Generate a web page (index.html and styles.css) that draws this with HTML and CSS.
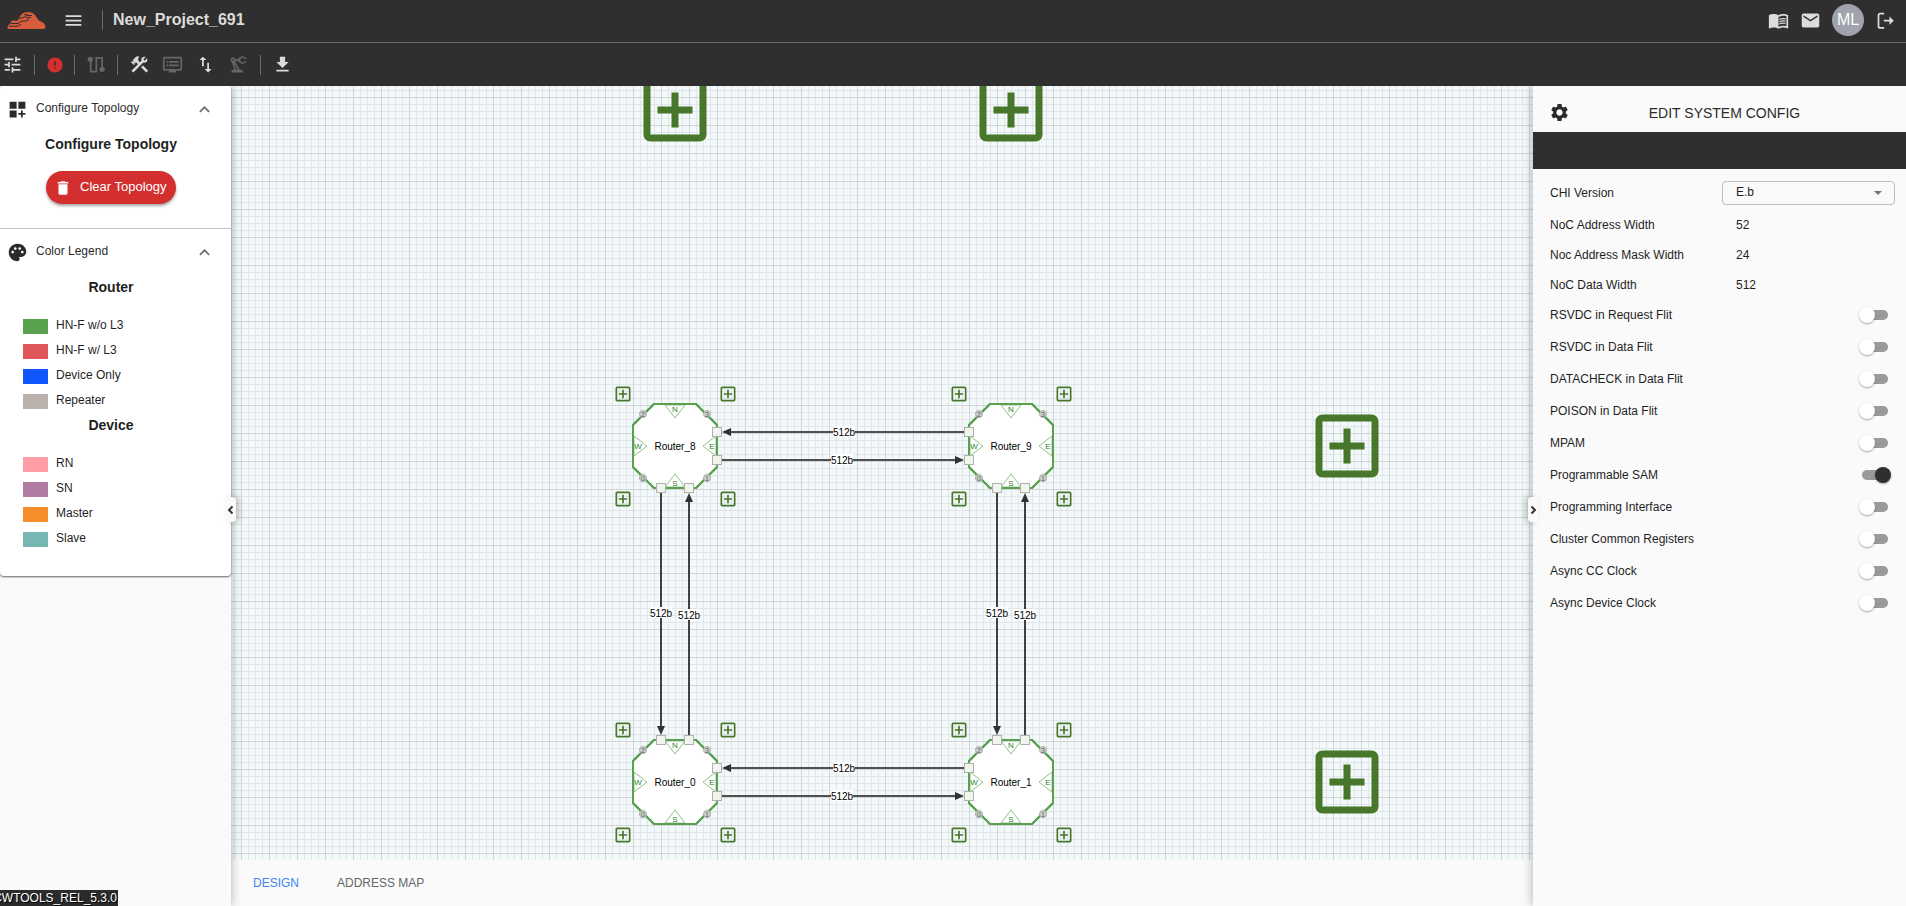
FILE: index.html
```html
<!DOCTYPE html>
<html lang="en">
<head>
<meta charset="utf-8">
<title>New_Project_691</title>
<link rel="stylesheet" href="styles.css">
</head>
<body>
<header class="header">
  <div class="bar">
    <svg class="logo" viewBox="0 0 39 17" aria-label="Logo"><path fill="#d75c3c" d="M2 17Q0 17 .4 15Q1 12.500 3.500 11.500L4.500 8.800L11 8.500L12 6Q14.500 0 20.500 0Q27 0 29.500 5.300Q31 8 33 9.200Q38 10.500 38.500 15Q38.500 17 36 17Z"/><path fill="none" stroke="#2f2f2f" stroke-width="1" d="M4 11.500H11L14 9.300L20 8.700L22 7M2 14.200H11L14 12.200M12 6.200L17 5.500L20 3.500H25M19 6L24 5.300M17 3L21 2"/></svg>
    <button class="icon-btn menu" aria-label="Menu"><svg class="icon" viewBox="0 0 24 24"><path d="M3 18h18v-2H3v2zm0-5h18v-2H3v2zm0-7v2h18V6H3z"/></svg></button>
    <span class="sep"></span>
    <h1 class="project">New_Project_691</h1>
    <div class="actions">
      <button class="icon-btn" aria-label="Documentation"><svg class="icon" viewBox="0 0 24 24"><path d="M21 5c-1.110-.35-2.330-.5-3.500-.5-1.950 0-4.050.4-5.500 1.500-1.450-1.100-3.550-1.500-5.500-1.500S2.450 4.900 1 6v14.650c0 .25.25.5.5.5.1 0 .15-.05.25-.05C3.100 20.450 5.050 20 6.500 20c1.950 0 4.050.4 5.500 1.500 1.350-.85 3.800-1.500 5.500-1.500 1.650 0 3.350.3 4.750 1.050.1.050.15.050.25.050.25 0 .5-.25.5-.5V6c-.6-.45-1.250-.75-2-1zm0 13.500c-1.100-.35-2.300-.5-3.500-.5-1.700 0-4.150.65-5.500 1.500V8c1.350-.85 3.800-1.500 5.500-1.500 1.200 0 2.400.15 3.500.5v11.500z"/><path d="M17.500 10.500c.88 0 1.730.09 2.500.26V9.240c-.79-.15-1.640-.24-2.500-.24-1.700 0-3.240.29-4.500.83v1.660c1.130-.64 2.700-.99 4.500-.99zM13 12.490v1.660c1.130-.64 2.700-.99 4.500-.99.88 0 1.730.09 2.500.26V11.900c-.79-.15-1.640-.24-2.500-.24-1.700 0-3.240.3-4.500.83zm4.500 1.840c-1.700 0-3.240.29-4.500.83v1.660c1.130-.64 2.700-.99 4.500-.99.88 0 1.730.09 2.500.26v-1.520c-.79-.16-1.640-.24-2.500-.24z"/></svg></button>
      <button class="icon-btn" aria-label="Mail"><svg class="icon" viewBox="0 0 24 24"><path d="M20 4H4c-1.100 0-1.990.9-1.990 2L2 18c0 1.100.9 2 2 2h16c1.100 0 2-.9 2-2V6c0-1.100-.9-2-2-2zm0 4l-8 5-8-5V6l8 5 8-5v2z"/></svg></button>
      <button class="avatar">ML</button>
      <button class="icon-btn" aria-label="Log out"><svg class="icon" viewBox="0 0 24 24"><path class="line" d="M10.500 4H6Q4 4 4 6v12.500q0 2 2 2h4.500M10 12.200h9"/><path d="M16.500 7.500l5 4.700-5 4.700z"/></svg></button>
    </div>
  </div>
  <div class="tools">
    <button class="icon-btn" aria-label="Settings"><svg class="icon" viewBox="0 0 24 24"><path d="M3 17v2h6v-2H3zM3 5v2h10V5H3zm10 16v-2h8v-2h-8v-2h-2v6h2zM7 9v2H3v2h4v2h2V9H7zm14 4v-2H11v2h10zm-6-4h2V7h4V5h-4V3h-2v6z"/></svg></button>
    <span class="sep"></span>
    <button class="icon-btn error" aria-label="Errors"><svg class="icon small" viewBox="0 0 24 24"><path d="M12 2C6.480 2 2 6.480 2 12s4.480 10 10 10 10-4.480 10-10S17.520 2 12 2zm1 15h-2v-2h2v2zm0-4h-2V7h2v6z"/></svg></button>
    <span class="sep"></span>
    <button class="icon-btn" aria-label="Route" disabled><svg class="icon" viewBox="0 0 24 24"><path class="line" d="M6.500 6v14h6.500V4.500h6.500V17"/><circle cx="6" cy="6" r="3"/><circle cx="19.500" cy="17.500" r="3"/></svg></button>
    <span class="sep"></span>
    <div class="group">
      <button class="icon-btn" aria-label="Build"><svg class="icon" viewBox="0 0 24 24"><path d="M13.783 15.172l2.121-2.121 5.996 5.996-2.121 2.121z"/><path d="M17.500 10c1.930 0 3.500-1.570 3.500-3.500 0-.58-.16-1.120-.41-1.600l-2.700 2.700-1.490-1.490 2.700-2.700c-.48-.25-1.020-.41-1.600-.41C15.570 3 14 4.570 14 6.500c0 .41.08.8.21 1.160l-1.850 1.850-1.780-1.780.71-.71-1.410-1.410L12 3.490c-1.170-1.170-3.070-1.170-4.240 0L4.220 7.030l1.410 1.410H2.810l-.71.71 3.540 3.540.71-.71V9.150l1.410 1.410.71-.71 1.780 1.780-7.410 7.410 2.120 2.120L16.340 9.790c.36.13.75.21 1.160.21z"/></svg></button>
      <button class="icon-btn" aria-label="Console" disabled><svg class="icon" viewBox="0 0 24 24"><path d="M21 3H3c-1.100 0-2 .9-2 2v12c0 1.100.9 2 2 2h5v2h8v-2h5c1.100 0 1.990-.9 1.990-2L23 5c0-1.100-.9-2-2-2zm0 14H3V5h18v12zm-2-9H8v2h11V8zm0 4H8v2h11v-2zM7 8H5v2h2V8zm0 4H5v2h2v-2z"/></svg></button>
      <button class="icon-btn" aria-label="Import and export"><svg class="icon" viewBox="0 0 24 24"><path d="M9 3L5 6.990h3V14h2V6.990h3L9 3zm7 14.010V10h-2v7.010h-3L15 21l4-3.990h-3z"/></svg></button>
      <button class="icon-btn" aria-label="Generate" disabled><svg class="icon" viewBox="0 0 24 24"><path d="m19.930 8.350-3.600 1.680L14 7.700V6.300l2.330-2.330 3.600 1.680c.38.18.82.01 1-.36.18-.38.01-.82-.36-1l-3.920-1.830c-.38-.18-.83-.1-1.130.2L13.780 4.400c-.18-.24-.46-.4-.78-.4-.55 0-1 .45-1 1v1H8.820C8.400 4.840 7.300 4 6 4 4.340 4 3 5.340 3 7c0 1.100.6 2.050 1.480 2.580L7.080 18H6c-1.100 0-2 .9-2 2v1h13v-1c0-1.100-.9-2-2-2h-1.620L8.410 8.770c.17-.24.31-.49.41-.77H12v1c0 .55.45 1 1 1 .32 0 .6-.16.78-.4l1.740 1.740c.3.3.75.38 1.130.2l3.920-1.830c.38-.18.54-.62.36-1-.18-.37-.62-.54-1-.36zM6 8c-.55 0-1-.45-1-1s.45-1 1-1 1 .45 1 1-.45 1-1 1zm5.110 10H9.170l-2.460-8h.1l4.300 8z"/></svg></button>
    </div>
    <span class="sep"></span>
    <button class="icon-btn" aria-label="Download"><svg class="icon" viewBox="0 0 24 24"><path d="M19 9h-4V3H9v6H5l7 7 7-7zM5 18v2h14v-2H5z"/></svg></button>
  </div>
</header>

<div class="workspace">
  <aside class="sidebar">
    <div class="cards">
      <section class="card">
        <button class="card-head">
          <svg class="icon" viewBox="0 0 24 24"><path d="M3 3h8v8H3zm10 0h8v8h-8zM3 13h8v8H3zm15 0h-2v3h-3v2h3v3h2v-3h3v-2h-3z"/></svg>
          <span class="card-title">Configure Topology</span>
          <svg class="icon chevron" viewBox="0 0 24 24"><path d="M12 8l-6 6 1.410 1.410L12 10.830l4.590 4.580L18 14z"/></svg>
        </button>
        <h2 class="subhead">Configure Topology</h2>
        <button class="clear"><svg class="icon small" viewBox="0 0 24 24"><path d="M6 19c0 1.100.9 2 2 2h8c1.100 0 2-.9 2-2V7H6v12zM19 4h-3.500l-1-1h-5l-1 1H5v2h14V4z"/></svg><span>Clear Topology</span></button>
      </section>
      <section class="card">
        <button class="card-head">
          <svg class="icon" viewBox="0 0 24 24"><path d="M12 2C6.490 2 2 6.490 2 12s4.490 10 10 10c1.380 0 2.500-1.120 2.500-2.500 0-.61-.23-1.200-.64-1.670-.08-.1-.13-.21-.13-.33 0-.28.22-.5.5-.5H16c3.310 0 6-2.690 6-6 0-4.960-4.490-9-10-9zm5.500 11c-.83 0-1.500-.67-1.500-1.500s.67-1.500 1.500-1.500 1.500.67 1.500 1.500-.67 1.500-1.500 1.500zm-3-4c-.83 0-1.500-.67-1.500-1.500S13.670 6 14.500 6s1.500.67 1.500 1.500S15.330 9 14.500 9zM5 11.500c0-.83.67-1.500 1.500-1.500s1.500.67 1.500 1.500S7.330 13 6.500 13 5 12.330 5 11.500zm6-4c0 .83-.67 1.500-1.500 1.500S8 8.330 8 7.500 8.670 6 9.500 6s1.500.67 1.500 1.500z"/></svg>
          <span class="card-title">Color Legend</span>
          <svg class="icon chevron" viewBox="0 0 24 24"><path d="M12 8l-6 6 1.410 1.410L12 10.830l4.590 4.580L18 14z"/></svg>
        </button>
        <h2 class="subhead">Router</h2>
        <ul class="legend">
          <li><span class="swatch green"></span>HN-F w/o L3</li>
          <li><span class="swatch red"></span>HN-F w/ L3</li>
          <li><span class="swatch blue"></span>Device Only</li>
          <li><span class="swatch grey"></span>Repeater</li>
        </ul>
        <h2 class="subhead">Device</h2>
        <ul class="legend">
          <li><span class="swatch pink"></span>RN</li>
          <li><span class="swatch purple"></span>SN</li>
          <li><span class="swatch orange"></span>Master</li>
          <li><span class="swatch teal"></span>Slave</li>
        </ul>
      </section>
    </div>
    <button class="handle handle-left" aria-label="Collapse left panel"><svg viewBox="0 0 8 10"><path d="M5.500 1.500L2 5l3.500 3.500"/></svg></button>
    <div class="version"><span>CWTOOLS_REL_5.3.0</span></div>
  </aside>

  <main class="main">
    <svg class="canvas" id="canvas"></svg>
    <nav class="tabs">
      <a class="tab active" href="#design">DESIGN</a>
      <a class="tab" href="#address-map">ADDRESS MAP</a>
    </nav>
  </main>

  <aside class="config">
    <div class="config-head">
      <svg class="icon" viewBox="0 0 24 24"><path d="M19.140 12.940c.04-.3.06-.61.06-.94 0-.32-.02-.64-.07-.94l2.030-1.580c.18-.14.23-.41.12-.61l-1.920-3.320c-.12-.22-.37-.29-.59-.22l-2.390.96c-.5-.38-1.030-.7-1.620-.94l-.36-2.540c-.04-.24-.24-.41-.48-.41h-3.840c-.24 0-.43.17-.47.41l-.36 2.540c-.59.24-1.130.57-1.620.94l-2.390-.96c-.22-.08-.47 0-.59.22L2.740 8.870c-.12.21-.08.47.12.61l2.030 1.580c-.05.3-.09.63-.09.94s.02.64.07.94l-2.030 1.580c-.18.14-.23.41-.12.61l1.920 3.320c.12.22.37.29.59.22l2.390-.96c.5.38 1.030.7 1.620.94l.36 2.540c.05.24.24.41.48.41h3.840c.24 0 .44-.17.47-.41l.36-2.540c.59-.24 1.130-.56 1.620-.94l2.390.96c.22.08.47 0 .59-.22l1.920-3.320c.12-.22.07-.47-.12-.61l-2.010-1.580zM12 15.600c-1.980 0-3.600-1.620-3.600-3.600s1.620-3.600 3.600-3.600 3.600 1.620 3.600 3.600-1.620 3.600-3.600 3.600z"/></svg>
      <h2>EDIT SYSTEM CONFIG</h2>
    </div>
    <div class="config-band"></div>
    <form class="fields">
      <div class="field"><label for="chi">CHI Version</label>
        <span class="select"><select id="chi"><option>E.b</option></select></span></div>
      <div class="field"><label for="aw">NoC Address Width</label><output id="aw">52</output></div>
      <div class="field"><label for="amw">Noc Address Mask Width</label><output id="amw">24</output></div>
      <div class="field"><label for="dw">NoC Data Width</label><output id="dw">512</output></div>
      <label class="toggle">RSVDC in Request Flit<input type="checkbox"></label>
      <label class="toggle">RSVDC in Data Flit<input type="checkbox"></label>
      <label class="toggle">DATACHECK in Data Flit<input type="checkbox"></label>
      <label class="toggle">POISON in Data Flit<input type="checkbox"></label>
      <label class="toggle">MPAM<input type="checkbox"></label>
      <label class="toggle">Programmable SAM<input type="checkbox" checked></label>
      <label class="toggle">Programming Interface<input type="checkbox"></label>
      <label class="toggle">Cluster Common Registers<input type="checkbox"></label>
      <label class="toggle">Async CC Clock<input type="checkbox"></label>
      <label class="toggle">Async Device Clock<input type="checkbox"></label>
    </form>
    <button class="handle handle-right" aria-label="Collapse right panel"><svg viewBox="0 0 8 10"><path d="M2.500 1.500L6 5 2.500 8.500"/></svg></button>
  </aside>
</div>
<script src="script.js"></script>
</body>
</html>
```
FILE: styles.css
```css
* { box-sizing: border-box; }

body {
  margin: 0;
  height: 100vh;
  display: flex;
  flex-direction: column;
  overflow: hidden;
  font: 12px/16px "Liberation Sans", Arial, sans-serif;
  color: #1f1f1f;
  background: #fafafa;
}

button {
  border: 0;
  padding: 0;
  background: none;
  color: inherit;
  font: inherit;
  cursor: pointer;
}

h1, h2, ul { margin: 0; padding: 0; }
ul { list-style: none; }

.icon {
  display: block;
  flex: none;
  width: 21px;
  height: 21px;
  fill: currentColor;
}
.icon.small { width: 18px; height: 18px; }
.line { fill: none; stroke: currentColor; stroke-width: 2; }

/* Header */
.header {
  flex: none;
  background: #2f2f2f;
  color: #dcdcdc;
  position: relative;
  z-index: 3;
}
.bar, .tools {
  display: flex;
  align-items: center;
  height: 43px;
}
.bar { border-bottom: 1px solid #6b6b6b; padding: 0 10px 2px 7px; }
.tools { padding-left: 2px; }
.logo { width: 39px; height: 17px; }
.menu { margin: 0 18px 0 17px; }
.sep { width: 1px; height: 20px; background: #6b6b6b; }
.bar .sep { margin-right: 10px; }
.project { font-size: 16px; line-height: 20px; }
.actions {
  margin-left: auto;
  display: flex;
  align-items: center;
  gap: 11px;
}
.avatar {
  width: 32px;
  height: 32px;
  border-radius: 50%;
  background: #a0a3ad;
  color: #fff;
  font-size: 16px;
}
.tools .sep { margin: 0 11px; }
.tools .error + .sep { margin: 0 10px; }
.icon-btn:disabled { color: #666; }
.error { color: #d32f2f; }
.group { display: flex; gap: 12px; }

/* Panels */
.workspace { flex: 1; display: flex; min-height: 0; }
.sidebar, .config {
  flex: none;
  position: relative;
  z-index: 2;
  background: #fafafa;
  box-shadow: 0 0 10px rgba(0, 0, 0, .3);
}
.sidebar { width: 231px; }
.config { width: 373px; }

.cards {
  background: #fff;
  border-radius: 4px;
  box-shadow: 0 1px 2px rgba(0, 0, 0, .6);
}
.card + .card { border-top: 1px solid #c4c4c4; }
.card { padding-bottom: 24px; }
.card-head {
  display: flex;
  align-items: center;
  width: 100%;
  height: 46px;
  padding: 0 16px 0 7px;
  color: #2b2b2b;
  text-align: left;
}
.card-title { flex: 1; margin-left: 8px; padding-bottom: 2px; }
.chevron { color: #6b6b6b; }
.subhead {
  margin-right: 9px;
  font-size: 14px;
  line-height: 24px;
  text-align: center;
}
.legend + .subhead { margin-top: -1px; }
.clear {
  display: flex;
  align-items: center;
  gap: 8px;
  width: 130px;
  height: 33px;
  margin: 15px 0 0 46px;
  padding-left: 8px;
  border-radius: 17px;
  background: #d32f2f;
  color: #fff;
  font-size: 13px;
  white-space: nowrap;
  box-shadow: 0 2px 3px rgba(0, 0, 0, .35);
}
.clear span { padding-bottom: 2px; }
.legend { padding: 15px 0 0 23px; }
.legend li {
  display: flex;
  align-items: flex-start;
  gap: 8px;
  height: 25px;
  line-height: 23px;
}
.swatch { width: 25px; height: 15px; margin-top: 5px; }
.green { background: #59a14f; }
.red { background: #e15759; }
.blue { background: #1157ff; }
.grey { background: #bab0ac; }
.pink { background: #ff9da7; }
.purple { background: #b07aa1; }
.orange { background: #f58e2b; }
.teal { background: #76b7b2; }

.handle {
  position: absolute;
  top: 411px;
  width: 10px;
  height: 25px;
  background: #fafafa;
}
.handle svg {
  display: block;
  width: 8px;
  height: 10px;
  margin-left: 1px;
  fill: none;
  stroke: #333;
  stroke-width: 2;
}
.handle-left { right: -5px; border-radius: 0 4px 4px 0; box-shadow: 3px 0 6px rgba(0, 0, 0, .2); }
.handle-right { left: -5px; border-radius: 4px 0 0 4px; box-shadow: -3px 0 6px rgba(0, 0, 0, .2); }

.version {
  position: absolute;
  left: 0;
  bottom: 0;
  width: 118px;
  display: flex;
  justify-content: flex-end;
  overflow: hidden;
  padding-right: 1px;
  background: #2b2b2b;
  color: #fff;
  text-shadow: 1px 1px 0 #000;
}

/* Canvas */
.main { flex: 1; min-width: 0; display: flex; flex-direction: column; }
.canvas {
  flex: 1;
  min-height: 0;
  width: 100%;
  background-color: #f3f8fa;
  background-image:
    linear-gradient(90deg, #d1d5d6 1px, transparent 1px),
    linear-gradient(#d1d5d6 1px, transparent 1px),
    linear-gradient(90deg, #e1e6e8 1px, transparent 1px),
    linear-gradient(#e1e6e8 1px, transparent 1px);
  background-size: 28px 28px, 28px 28px, 7px 7px, 7px 7px;
  background-position: 10px 11px, 10px 11px, 3px 4px, 3px 4px;
}
.canvas text {
  text-anchor: middle;
  dominant-baseline: central;
  font-size: 10px;
  fill: #000;
}
.body { fill: #fff; stroke: #59a14f; stroke-width: 2; }
.outline { fill: none; }
.tri { fill: #fff; stroke: #8fc088; stroke-width: 1; }
.canvas .dir { font-size: 8px; fill: #2f7d32; }
.dot { fill: #d0d0d0; stroke: #aaa; stroke-width: 1; }
.canvas .num { font-size: 7px; fill: #3f6b3f; }
.port { fill: #f0f6ee; stroke: #b0b0b0; stroke-width: 1; }
.add { fill: #48772c; }
.wire { stroke: #505050; stroke-width: 2; }
.wire.down { stroke: #404040; }
.arrow { fill: #333; }
.tag { fill: #fff; }

.tabs {
  flex: none;
  height: 46px;
  display: flex;
  align-items: center;
  gap: 38px;
  padding-left: 22px;
  background: #fafafa;
}
.tab { color: #666; text-decoration: none; }
.tab.active { color: #4285f4; }

/* System config */
.config-head {
  display: flex;
  align-items: center;
  height: 46px;
  padding: 7px 17px 0 16px;
  color: #2b2b2b;
}
.config-head h2 {
  flex: 1;
  margin-right: 10px;
  font-size: 14px;
  font-weight: 400;
  text-align: center;
}
.config-band { height: 37px; background: #2f2f2f; }
.fields { padding: 7px 11px 0 17px; }
.field {
  display: grid;
  grid-template-columns: 1fr 173px;
  align-items: center;
  height: 30px;
}
.field:first-child { height: 34px; }
.field output { padding-left: 14px; }
.select { position: relative; }
.select::after {
  content: "";
  position: absolute;
  right: 13px;
  top: 10px;
  border: 4px solid transparent;
  border-top-color: #757575;
  border-bottom: 0;
  pointer-events: none;
}
.select select {
  display: block;
  appearance: none;
  width: 100%;
  height: 24px;
  padding: 0 13px 2px;
  border: 1px solid #bdbdbd;
  border-radius: 4px;
  background: transparent;
  color: inherit;
  font: inherit;
}
.toggle {
  display: flex;
  align-items: center;
  justify-content: space-between;
  height: 32px;
  padding-right: 7px;
}
.field + .toggle { margin-top: -1px; }
.toggle input {
  appearance: none;
  position: relative;
  width: 26px;
  height: 10px;
  margin: 0;
  border-radius: 5px;
  background: #9a9a9a;
}
.toggle input::before {
  content: "";
  position: absolute;
  top: -3px;
  left: -3px;
  width: 16px;
  height: 16px;
  border-radius: 50%;
  background: #fff;
  box-shadow: 0 1px 2px rgba(0, 0, 0, .35);
}
.toggle input:checked::before { left: 13px; background: #2f2f2f; }
```
FILE: script.js
```
const PITCH = 336;
const ORIGIN = { x: 444, y: 360 };
const ADD_ICON = "M19 3H5c-1.110 0-2 .9-2 2v14c0 1.100.89 2 2 2h14c1.100 0 2-.9 2-2V5c0-1.100-.9-2-2-2zm0 16H5V5h14v14zm-8-2h2v-4h4v-2h-4V7h-2v4H7v2h4z";

const at = (col, row) => ({ x: ORIGIN.x + col * PITCH, y: ORIGIN.y + row * PITCH });

function addIcon(x, y, scale) {
  return `<path class="add" d="${ADD_ICON}" transform="translate(${x} ${y}) scale(${scale}) translate(-12 -12)"/>`;
}

function wire(x1, y1, x2, y2, tagX, tagY) {
  const dx = Math.sign(x2 - x1), dy = Math.sign(y2 - y1);
  const bx = x2 - dx * 9, by = y2 - dy * 9;
  return `<line class="wire ${dy ? "down" : ""}" x1="${x1}" y1="${y1}" x2="${bx}" y2="${by}"/>
    <path class="arrow" d="M${x2} ${y2}L${bx + dy * 4} ${by + dx * 4}L${bx - dy * 4} ${by - dx * 4}z"/>
    <rect class="tag" x="${tagX - 11}" y="${tagY - 6}" width="22" height="11"/>
    <text x="${tagX}" y="${tagY}">512b</text>`;
}

function router(name, col, row, ports) {
  const { x, y } = at(col, row);
  const octagon = "-21,-42 21,-42 42,-21 42,21 21,42 -21,42 -42,21 -42,-21";
  const tris = ["-10,-41 10,-41 0,-28", "-10,41 10,41 0,28", "-41,-10 -41,10 -28,0", "41,-10 41,10 28,0"];
  const dirs = [["N", 0, -37], ["S", 0, 37], ["W", -37, 0], ["E", 37, 0]];
  const dots = [["2", -32, -32], ["3", 32, -32], ["0", -32, 32], ["1", 32, 32]];
  const spots = { N: [[-14, -42], [14, -42]], S: [[-14, 42], [14, 42]], W: [[-42, -14], [-42, 14]], E: [[42, -14], [42, 14]] };
  return `<g transform="translate(${x} ${y})">
    <polygon class="body" points="${octagon}"/>
    ${tris.map(p => `<polygon class="tri" points="${p}"/>`).join("")}
    <polygon class="body outline" points="${octagon}"/>
    ${dirs.map(([t, a, b]) => `<text class="dir" x="${a}" y="${b}">${t}</text>`).join("")}
    ${dots.map(([t, a, b]) => `<circle class="dot" cx="${a}" cy="${b}" r="3.5"/><text class="num" x="${a}" y="${b}">${t}</text>`).join("")}
    ${[...ports].flatMap(p => spots[p]).map(([a, b]) => `<rect class="port" x="${a - 4.5}" y="${b - 4.5}" width="9" height="9"/>`).join("")}
    <text x="0" y="0">${name}</text>
    ${[[-52, -52], [53, -52], [-52, 53], [53, 53]].map(([a, b]) => addIcon(a, b, 20 / 24)).join("")}
  </g>`;
}

let out = "";
for (const row of [0, 1]) {
  const { x, y } = at(0, row);
  out += wire(x + PITCH - 47, y - 14, x + 47, y - 14, x + 169, y - 14);
  out += wire(x + 47, y + 14, x + PITCH - 47, y + 14, x + 167, y + 14);
}
for (const col of [0, 1]) {
  const { x, y } = at(col, 0);
  out += wire(x - 14, y + 47, x - 14, y + PITCH - 47, x - 14, y + 167);
  out += wire(x + 14, y + PITCH - 47, x + 14, y + 47, x + 14, y + 169);
}
out += router("Router_8", 0, 0, "ES") + router("Router_9", 1, 0, "WS");
out += router("Router_0", 0, 1, "NE") + router("Router_1", 1, 1, "NW");
for (const [col, row] of [[0, -1], [1, -1], [2, 0], [2, 1]]) {
  const { x, y } = at(col, row);
  out += addIcon(x, y, 3.5);
}
document.getElementById("canvas").innerHTML = out;
```
